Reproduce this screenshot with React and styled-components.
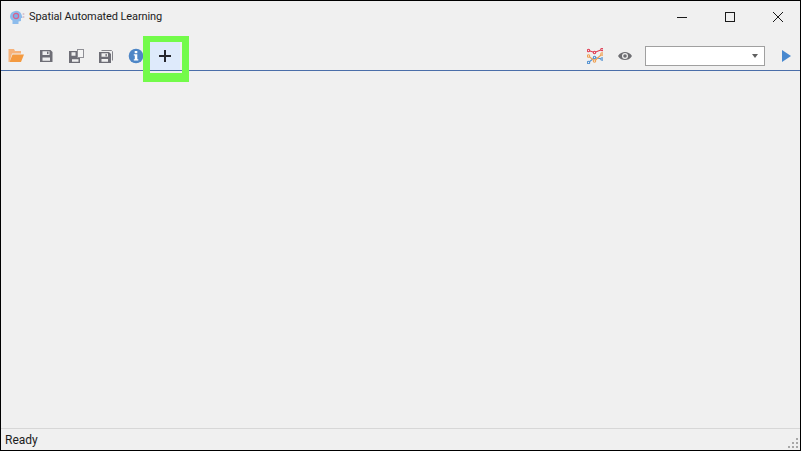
import React from "react"
import styled, { createGlobalStyle } from "styled-components"

const GlobalStyle = createGlobalStyle`
  html, body {
    margin: 0;
    padding: 0;
    background: #f0f0f0;
  }
`

const Window = styled.div`
  width: 801px;
  height: 451px;
  box-sizing: border-box;
  border: 1px solid #000;
  background: #f0f0f0;
  display: flex;
  flex-direction: column;
  font-family: "Roboto", "Liberation Sans", sans-serif;
  color: #1c1c1c;
`

const TitleBar = styled.header`
  height: 31px;
  display: flex;
  align-items: center;
  flex-shrink: 0;
`

const AppIcon = styled.svg`
  width: 16px;
  height: 16px;
  margin-left: 8px;
`

const Title = styled.span`
  margin-left: 4px;
  font-size: 11px;
  letter-spacing: -0.1px;
  flex: 1;
`

const WindowButton = styled.div`
  width: 48px;
  height: 31px;
  box-sizing: border-box;
  padding-left: 4px;
  display: flex;
  align-items: center;
  justify-content: center;
`

const Toolbar = styled.nav`
  height: 39px;
  box-sizing: border-box;
  padding: 10px 0 0 0;
  display: flex;
  align-items: center;
  border-bottom: 1px solid #4a6ea9;
  flex-shrink: 0;
`

const ToolButton = styled.div`
  width: ${p => p.$w || 30}px;
  height: 28px;
  display: flex;
  align-items: center;
  justify-content: center;
  flex-shrink: 0;
`

const PlusButton = styled(ToolButton)`
  position: relative;
  background: #deeafb;
  margin-left: -1px;
  &::after {
    content: "";
    position: absolute;
    left: -7px;
    top: -6px;
    width: 46px;
    height: 46px;
    box-sizing: border-box;
    border: solid #73fb4a;
    border-width: 6px 7px 9px 7px;
  }
`

const RunButton = styled(ToolButton)`
  justify-content: flex-end;
  padding-right: 9px;
  box-sizing: border-box;
`

const Spacer = styled.div`
  flex: 1;
`

const Combo = styled.div`
  width: 120px;
  height: 20px;
  box-sizing: border-box;
  border: 1px solid #a0a0a0;
  background: #fff;
  margin-left: 5px;
  display: flex;
  align-items: center;
  justify-content: flex-end;
  padding-right: 6px;
`

const ComboArrow = styled.div`
  width: 0;
  height: 0;
  border-left: 3.5px solid transparent;
  border-right: 3.5px solid transparent;
  border-top: 4px solid #606060;
`

const Content = styled.main`
  flex: 1;
`

const StatusBar = styled.footer`
  height: 22px;
  box-sizing: border-box;
  border-top: 1px solid #d7d7d7;
  display: flex;
  align-items: center;
  justify-content: space-between;
  padding-left: 4px;
  font-size: 12px;
  flex-shrink: 0;
`

const Grip = styled.svg`
  width: 12px;
  height: 12px;
  margin-right: 1px;
  align-self: flex-end;
  margin-bottom: 1px;
`

const Icon = ({ children, size = 16 }) => (
  <svg width={size} height={size} viewBox={`0 0 ${size} ${size}`}>{children}</svg>
)

const FolderIcon = () => (
  <Icon>
    <path d="M0.500 14V1h5.500l1 2h6v2.500H4L1.500 14z" fill="#f6b27a" />
    <path d="M1.500 14L4.500 6.500H16L13 14z" fill="#f49a40" />
  </Icon>
)

const SaveIcon = () => (
  <Icon>
    <path fillRule="evenodd" fill="#6e6e76" d="M2 2h10.500L14.500 4v10H2zM4.500 3.300V7h7V3.300zM4.500 9.500V12.800h7.500V9.500z" />
    <rect x="9" y="3.600" width="1.500" height="2.500" fill="#6e6e76" />
  </Icon>
)

const SaveAsIcon = () => (
  <Icon>
    <path fillRule="evenodd" fill="#6e6e76" d="M1 3h8v6.500h3V15H1zM3.500 4.300v3.500h4v-3.500zM4 11.300v2.500h6.500v-2.500z" />
    <rect x="9.500" y="1.500" width="6" height="8" fill="#f4f4f4" stroke="#8f8f95" />
  </Icon>
)

const SaveAllIcon = () => (
  <Icon>
    <path fill="none" stroke="#85858b" d="M3.500 2.500h10l1 1v9" />
    <path fillRule="evenodd" fill="#6e6e76" d="M1 4h10l2 2v9H1zM3.500 5.300v3.500h6.500V5.300zM3.500 11v2.800h6.500V11z" />
    <rect x="7.500" y="6" width="1.300" height="2.400" fill="#6e6e76" />
  </Icon>
)

const InfoIcon = () => (
  <Icon>
    <circle cx="8" cy="8" r="7.300" fill="#4e86c6" />
    <rect x="6.700" y="3" width="2.600" height="2.200" fill="#fff" />
    <path d="M5.800 6.300h3.500v5h1v1.300H5.800v-1.300h1V7.600h-1z" fill="#fff" />
  </Icon>
)

const PlusIcon = () => (
  <Icon size={12}>
    <path d="M5 0h2v5h5v2H7v5H5V7H0V5h5z" fill="#26262c" />
  </Icon>
)

const ChartLine = ({ color, points }) => (
  <g fill="none" stroke={color} strokeWidth="1.100">
    <polyline points={points.map(p => p.join(",")).join(" ")} />
    {points.map(([x, y]) => (
      <circle key={x} cx={x} cy={y} r="1.200" fill="#f0f0f0" />
    ))}
  </g>
)

const ChartIcon = () => (
  <Icon>
    <ChartLine color="#4f8fd0" points={[[1.500, 14.500], [7.500, 9.500], [15, 11]]} />
    <ChartLine color="#f0a050" points={[[1.500, 8], [7.500, 13], [15, 6]]} />
    <ChartLine color="#df3b52" points={[[1.500, 2.500], [7.500, 4.500], [15, 1.500]]} />
  </Icon>
)

const EyeIcon = () => (
  <Icon size={14}>
    <path fillRule="evenodd" fill="#6e6e72" d="M0 7C2 4 4.400 3 7 3s5 1 7 4c-2 3-4.400 4-7 4S2 10 0 7zm7 3a3 3 0 1 0 0-6 3 3 0 0 0 0 6z" />
    <circle cx="7" cy="7" r="1.800" fill="#6e6e72" />
  </Icon>
)

const PlayIcon = () => (
  <svg width="9" height="12" viewBox="0 0 9 12">
    <path d="M0 0l9 6-9 6z" fill="#4788cf" />
  </svg>
)

const App = () => (
  <>
    <GlobalStyle />
    <Window>
      <TitleBar>
        <AppIcon viewBox="0 0 16 16">
          <path d="M1 7.500a6 6 0 0 1 11.500-2l1 3.500h-1.500v3l-2.500.5V15H3.500v-3.500C1.800 10.500 1 9 1 7.500z" fill="#8dbcec" />
          <circle cx="7" cy="7" r="2.600" fill="#7fb0e8" stroke="#d8608f" strokeWidth="1.200" />
          <circle cx="14.500" cy="5" r="1" fill="#d8c0cc" />
          <circle cx="14.500" cy="8" r="1" fill="#d8c0cc" />
        </AppIcon>
        <Title>Spatial Automated Learning</Title>
        <WindowButton>
          <svg width="10" height="10" viewBox="0 0 10 10"><path d="M0 5.500h10" stroke="#1a1a1a" /></svg>
        </WindowButton>
        <WindowButton>
          <svg width="10" height="10" viewBox="0 0 10 10"><rect x=".5" y=".5" width="9" height="9" fill="none" stroke="#1a1a1a" /></svg>
        </WindowButton>
        <WindowButton>
          <svg width="10" height="10" viewBox="0 0 10 10"><path d="M0 0l10 10M10 0L0 10" stroke="#1a1a1a" /></svg>
        </WindowButton>
      </TitleBar>
      <Toolbar>
        <ToolButton><FolderIcon /></ToolButton>
        <ToolButton><SaveIcon /></ToolButton>
        <ToolButton><SaveAsIcon /></ToolButton>
        <ToolButton><SaveAllIcon /></ToolButton>
        <ToolButton><InfoIcon /></ToolButton>
        <PlusButton><PlusIcon /></PlusButton>
        <Spacer />
        <ToolButton><ChartIcon /></ToolButton>
        <ToolButton><EyeIcon /></ToolButton>
        <Combo><ComboArrow /></Combo>
        <RunButton $w={35}><PlayIcon /></RunButton>
      </Toolbar>
      <Content />
      <StatusBar>
        <span>Ready</span>
        <Grip viewBox="0 0 12 12">
          <g fill="#a8a8a8">
            <rect x="9" y="1" width="2" height="2" />
            <rect x="5" y="5" width="2" height="2" />
            <rect x="9" y="5" width="2" height="2" />
            <rect x="1" y="9" width="2" height="2" />
            <rect x="5" y="9" width="2" height="2" />
            <rect x="9" y="9" width="2" height="2" />
          </g>
        </Grip>
      </StatusBar>
    </Window>
  </>
)

export default App
